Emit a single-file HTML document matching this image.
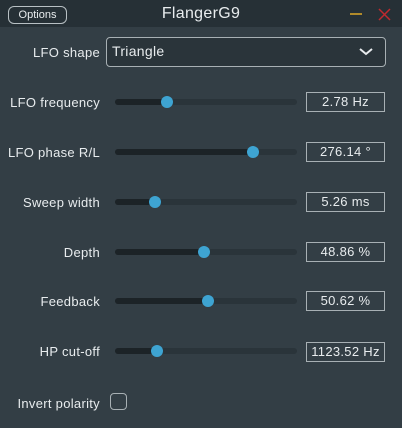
<!DOCTYPE html>
<html><head><style>
body{margin:0;width:402px;height:428px;background:#333e45;font-family:"Liberation Sans",sans-serif;color:#e8ecee;position:relative;overflow:hidden;letter-spacing:0.3px}
.tb{position:absolute;left:0;top:0;width:402px;height:27px;background:#263036}
.opt{position:absolute;left:8px;top:6px;width:59px;height:18px;border:1px solid #b8c0c4;border-radius:6px;font-size:11px;text-align:center;line-height:16px;box-sizing:border-box;letter-spacing:0}
.title{position:absolute;left:0;width:402px;top:5px;text-align:center;font-size:16px}
.lab{position:absolute;right:302px;font-size:13px;white-space:nowrap}
.track{position:absolute;left:115px;width:182px;height:6px;border-radius:3px;background:#2a343a}
.fill{position:absolute;left:0;top:0;height:6px;border-radius:3px;background:#1c2327}
.th{position:absolute;width:12px;height:12px;border-radius:50%;background:#3ea4d2;top:-3px;margin-left:-6px}
.val{position:absolute;left:306px;width:79px;height:20px;border:1px solid #a8b0b4;box-sizing:border-box;font-size:13px;text-align:center;line-height:18px}
</style></head><body>
<div class="tb"></div>
<div class="opt">Options</div>
<div class="title">FlangerG9</div>
<div style="position:absolute;left:350px;top:13px;width:12px;height:2px;background:#b08a2a"></div>
<svg style="position:absolute;left:378px;top:8px" width="13" height="13"><path d="M1 1L12 12M12 1L1 12" stroke="#c02a2e" stroke-width="1.5"/></svg>
<div class="lab" style="top:45px">LFO shape</div>
<div style="position:absolute;left:106px;top:37px;width:280px;height:30px;border:1px solid #a8b0b4;border-radius:4px;box-sizing:border-box;background:#2a343a"></div>
<div style="position:absolute;left:112px;top:43px;font-size:14px">Triangle</div>
<svg style="position:absolute;left:359px;top:47px" width="14" height="9"><path d="M1 2L7 7L13 2" stroke="#e8ecee" stroke-width="2" fill="none"/></svg>

<div class="lab" style="top:95px">LFO frequency</div>
<div class="track" style="top:99px"><div class="fill" style="width:52px"></div><div class="th" style="left:52px"></div></div>
<div class="val" style="top:92px">2.78 Hz</div>

<div class="lab" style="top:145px">LFO phase R/L</div>
<div class="track" style="top:149px"><div class="fill" style="width:138px"></div><div class="th" style="left:138px"></div></div>
<div class="val" style="top:142px">276.14 °</div>

<div class="lab" style="top:195px">Sweep width</div>
<div class="track" style="top:199px"><div class="fill" style="width:40px"></div><div class="th" style="left:40px"></div></div>
<div class="val" style="top:192px">5.26 ms</div>

<div class="lab" style="top:245px">Depth</div>
<div class="track" style="top:249px"><div class="fill" style="width:89px"></div><div class="th" style="left:89px"></div></div>
<div class="val" style="top:242px">48.86 %</div>

<div class="lab" style="top:294px">Feedback</div>
<div class="track" style="top:298px"><div class="fill" style="width:93px"></div><div class="th" style="left:93px"></div></div>
<div class="val" style="top:291px">50.62 %</div>

<div class="lab" style="top:344px">HP cut-off</div>
<div class="track" style="top:348px"><div class="fill" style="width:42px"></div><div class="th" style="left:42px"></div></div>
<div class="val" style="top:342px">1123.52 Hz</div>

<div class="lab" style="top:396px">Invert polarity</div>
<div style="position:absolute;left:110px;top:393px;width:17px;height:17px;border:1px solid #a8b0b4;border-radius:4px;box-sizing:border-box"></div>
</body></html>
